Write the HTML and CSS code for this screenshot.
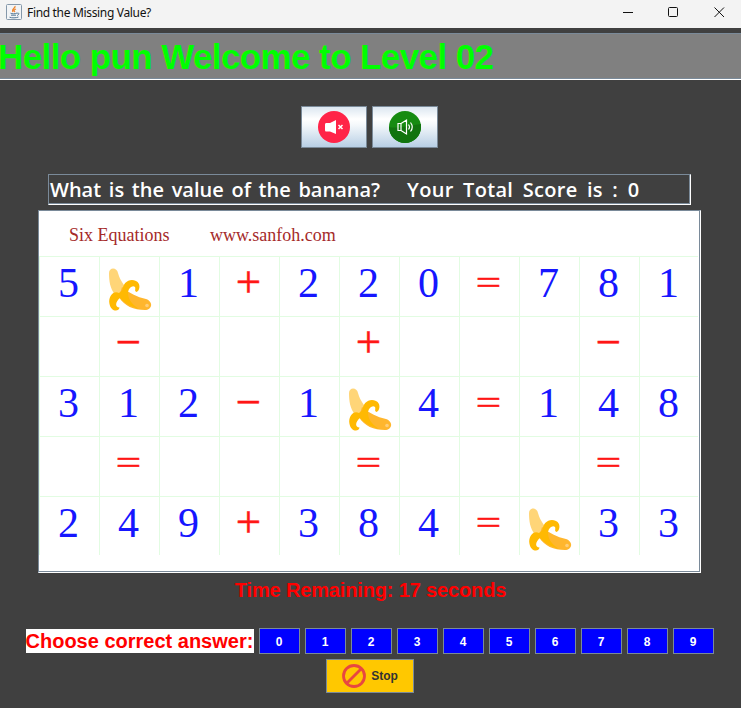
FILE: index.html
```
<!DOCTYPE html>
<html lang="en">
<head>
<meta charset="utf-8">
<title>Find the Missing Value?</title>
<link rel="stylesheet" href="styles.css">
</head>
<body>
<svg class="defs" aria-hidden="true">
  <symbol id="banana" viewBox="0 0 60 60">
    <path d="M9 17C9 11 17 11 18 17C20 25 25 30 28 34L23 40L15 39C10 32 9 25 9 17Z" fill="#ffd578"/>
    <path d="M22 31C29 37 37 41 46 43C54 46 52 54 45 54C34 54 24 50 19 41Z" fill="#ffb62d"/>
    <path d="M19 37C13 34 8 41 9.500 48C11 56 19 56 19.500 51.500C15 51.500 15 46 20 42C25 48 31 50 39 53C30 47 28 42 28 36C29 31 33 29 35 31C36 33 34 35 36.500 36C40 35 41 27 36 25C29 22 23 27 22.500 34Z" fill="#ffb902"/>
    <circle cx="47" cy="49.500" r="1.800" fill="#ffce78"/>
  </symbol>
</svg>
<header class="titlebar">
  <svg class="java" width="16" height="16" viewBox="0 0 16 16">
    <rect x=".5" y=".5" width="15" height="15" rx="1" fill="#f2f4f6" stroke="#8598aa"/>
    <path d="M9 2C10 4 5 5 7 8M10 5C7 6 8 7 9 8" fill="none" stroke="#ee852e" stroke-width="1.3"/>
    <path d="M4.500 9.200C6 10 9 10 11 9M5 11.200H10M3.500 13.200C6 14.200 10 14 12.500 13M11 9.300C14 8.500 13 11 11 11.500" fill="none" stroke="#557996"/>
  </svg>
  <span class="caption">Find the Missing Value?</span>
  <svg class="controls" width="104" height="12" viewBox="0 0 104 12" fill="none" stroke="#111">
    <path d="M0 6.500H10"/><rect x="45.500" y="1.500" width="9" height="9" rx="1"/><path d="M91.500 1.500L101 11M101 1.500L91.500 11"/>
  </svg>
</header>
<h1 class="welcome"><span>Hello pun Welcome to Level 02</span></h1>
<div class="sound">
  <button class="metal" aria-label="Mute"><svg width="32" height="32" viewBox="0 0 32 32"><circle cx="16" cy="16" r="16" fill="#ff2448"/><path d="M8 12H12L18 9V23L12 20.500H8Q7 20.500 7 19V13.500Q7 12 8 12Z" fill="#fff"/><path d="M20.500 14L24.500 18M24.500 14L20.500 18" stroke="#fff" stroke-width="1.500"/></svg></button>
  <button class="metal" aria-label="Sound on"><svg width="32" height="32" viewBox="0 0 32 32"><circle cx="16" cy="16" r="16" fill="#168b11"/><path d="M0 16C8 18 22 14 32 13V16A16 16 0 0 1 0 16Z" fill="#11740e"/><path d="M12 12.500H9V19.500H12ZM12 12.500L17.500 9V23L12 19.500M19.500 13.500Q21.500 16 19.500 18.500M21.500 11.500Q25 16 21.500 20.500" fill="none" stroke="#fff" stroke-width="1.200"/></svg></button>
</div>
<div class="question"><span class="ask">What is the value of the banana?</span><span class="score">Your Total Score is : 0</span></div>
<main class="puzzle">
  <div class="source"><span class="name">Six Equations</span><span>www.sanfoh.com</span></div>
  <div class="grid">
    <b>5</b><b><svg><use href="#banana"/></svg></b><b>1</b><i>+</i><b>2</b><b>2</b><b>0</b><i class="eq"><span>=</span></i><b>7</b><b>8</b><b>1</b>
    <b></b><i>−</i><b></b><b></b><b></b><i>+</i><b></b><b></b><b></b><i>−</i><b></b>
    <b>3</b><b>1</b><b>2</b><i>−</i><b>1</b><b><svg><use href="#banana"/></svg></b><b>4</b><i class="eq"><span>=</span></i><b>1</b><b>4</b><b>8</b>
    <b></b><i class="eq"><span>=</span></i><b></b><b></b><b></b><i class="eq"><span>=</span></i><b></b><b></b><b></b><i class="eq"><span>=</span></i><b></b>
    <b>2</b><b>4</b><b>9</b><i>+</i><b>3</b><b>8</b><b>4</b><i class="eq"><span>=</span></i><b><svg><use href="#banana"/></svg></b><b>3</b><b>3</b>
  </div>
</main>
<p class="time">Time Remaining: 17 seconds</p>
<div class="answers">
  <span class="choose">Choose correct answer:</span>
  <button>0</button><button>1</button><button>2</button><button>3</button><button>4</button><button>5</button><button>6</button><button>7</button><button>8</button><button>9</button>
</div>
<button class="stop"><svg width="24" height="24" viewBox="0 0 24 24" fill="none" stroke="#e84740" stroke-width="2.800"><circle cx="12" cy="12" r="10.500"/><path d="M4.500 19.500L19.500 4.500"/></svg>Stop</button>
</body>
</html>
```
FILE: styles.css
```
* { box-sizing: border-box; }
body { margin: 0; width: 741px; height: 708px; overflow: hidden; background: #404040; font-family: "Liberation Sans", Arial, sans-serif; display: flex; flex-direction: column; align-items: center; }
button { font: inherit; padding: 0; border: 1px solid #7a8a99; border-radius: 0; display: flex; align-items: center; justify-content: center; }
.defs { width: 0; height: 0; flex: none; }
.titlebar { width: 100%; height: 28px; flex: none; background: #f3f3f3; display: flex; align-items: center; padding: 0 14px 4px 6px; }
.caption { font: 12px/24px "Noto Sans", sans-serif; color: #111; margin: 2px 0 0 5px; letter-spacing: -0.33px; white-space: nowrap; }
.controls { margin-left: auto; }
.welcome { width: 100%; height: 47px; flex: none; margin: 5px 0 0; border-top: 1px solid #7a8a99; border-bottom: 1px solid #fff; box-shadow: inset 0 -1px #7a8a99; background: #808080; color: #00ff00; font-size: 35px; line-height: 46px; letter-spacing: -0.6px; white-space: nowrap; }
.welcome span { margin-left: -2px; }
.sound { display: flex; gap: 5px; margin: 26px 0 0 -2px; flex: none; }
.metal { width: 66px; height: 42px; background: linear-gradient(#dce7f1, #fff 30%, #f4f8fb 45%, #b8cfe5); }
.question { width: 643px; height: 31px; margin: 26px 0 0 -2px; flex: none; border: 1px solid #7a8a99; border-right-color: #fff; border-bottom-color: #fff; box-shadow: inset -1px -1px #7a8a99; color: #fff; font: 600 20px/30px "Comic Sans MS", "Open Sans", sans-serif; white-space: nowrap; display: flex; padding-left: 1px; }
.ask { width: 357px; word-spacing: 2.5px; }
.score { word-spacing: 4px; letter-spacing: 0.3px; }
.puzzle { width: 663px; height: 363px; margin-top: 5px; margin-left: -2px; flex: none; border: 1px solid #7a8a99; border-right-color: #fff; border-bottom-color: #fff; box-shadow: inset -1px -1px #7a8a99; background: #fff; font-family: "Liberation Serif", serif; }
.source { height: 45px; padding: 3px 0 0 30px; font-size: 18px; line-height: 43px; color: #a52a2a; display: flex; }
.name { width: 141px; }
.grid { display: grid; grid-template-columns: repeat(11, 60px); grid-template-rows: repeat(4, 60px) 59px; width: 659px; overflow: hidden; }
.grid b, .grid i { font: 42px/52px "Liberation Serif", serif; text-align: center; border-top: 1px solid #e2fce2; border-left: 1px solid #e2fce2; color: #1616ff; overflow: hidden; padding-right: 2px; }
.grid i { color: #ff1616; font-size: 45px; line-height: 50px; -webkit-text-stroke: 0.5px #ff1616; }
.grid .eq span { display: block; transform: scaleY(0.75); transform-origin: 50% 26px; -webkit-text-stroke-width: 0.7px; }
.grid svg { display: block; width: 60px; height: 60px; margin-top: -1px; }
.time { margin: 5px 0 0; height: 24px; flex: none; line-height: 24px; font-size: 20px; font-weight: bold; color: #f00; letter-spacing: -0.15px; }
.answers { display: flex; gap: 5px; align-items: center; height: 26px; margin: 26px 0 0 -2px; flex: none; }
.choose { width: 228px; height: 24px; background: #fff; color: #f00; font: bold 20px/24px "Liberation Sans", Arial, sans-serif; white-space: nowrap; }
.answers button { width: 41px; height: 26px; background: #00f; color: #fff; font-size: 12px; line-height: 12px; padding-top: 1px; font-weight: bold; }
.stop { width: 88px; height: 34px; margin: 5px 0 0 -2px; padding-left: 1px; flex: none; background: #ffc800; color: #333; font-size: 12px; font-weight: bold; gap: 5px; }
```
